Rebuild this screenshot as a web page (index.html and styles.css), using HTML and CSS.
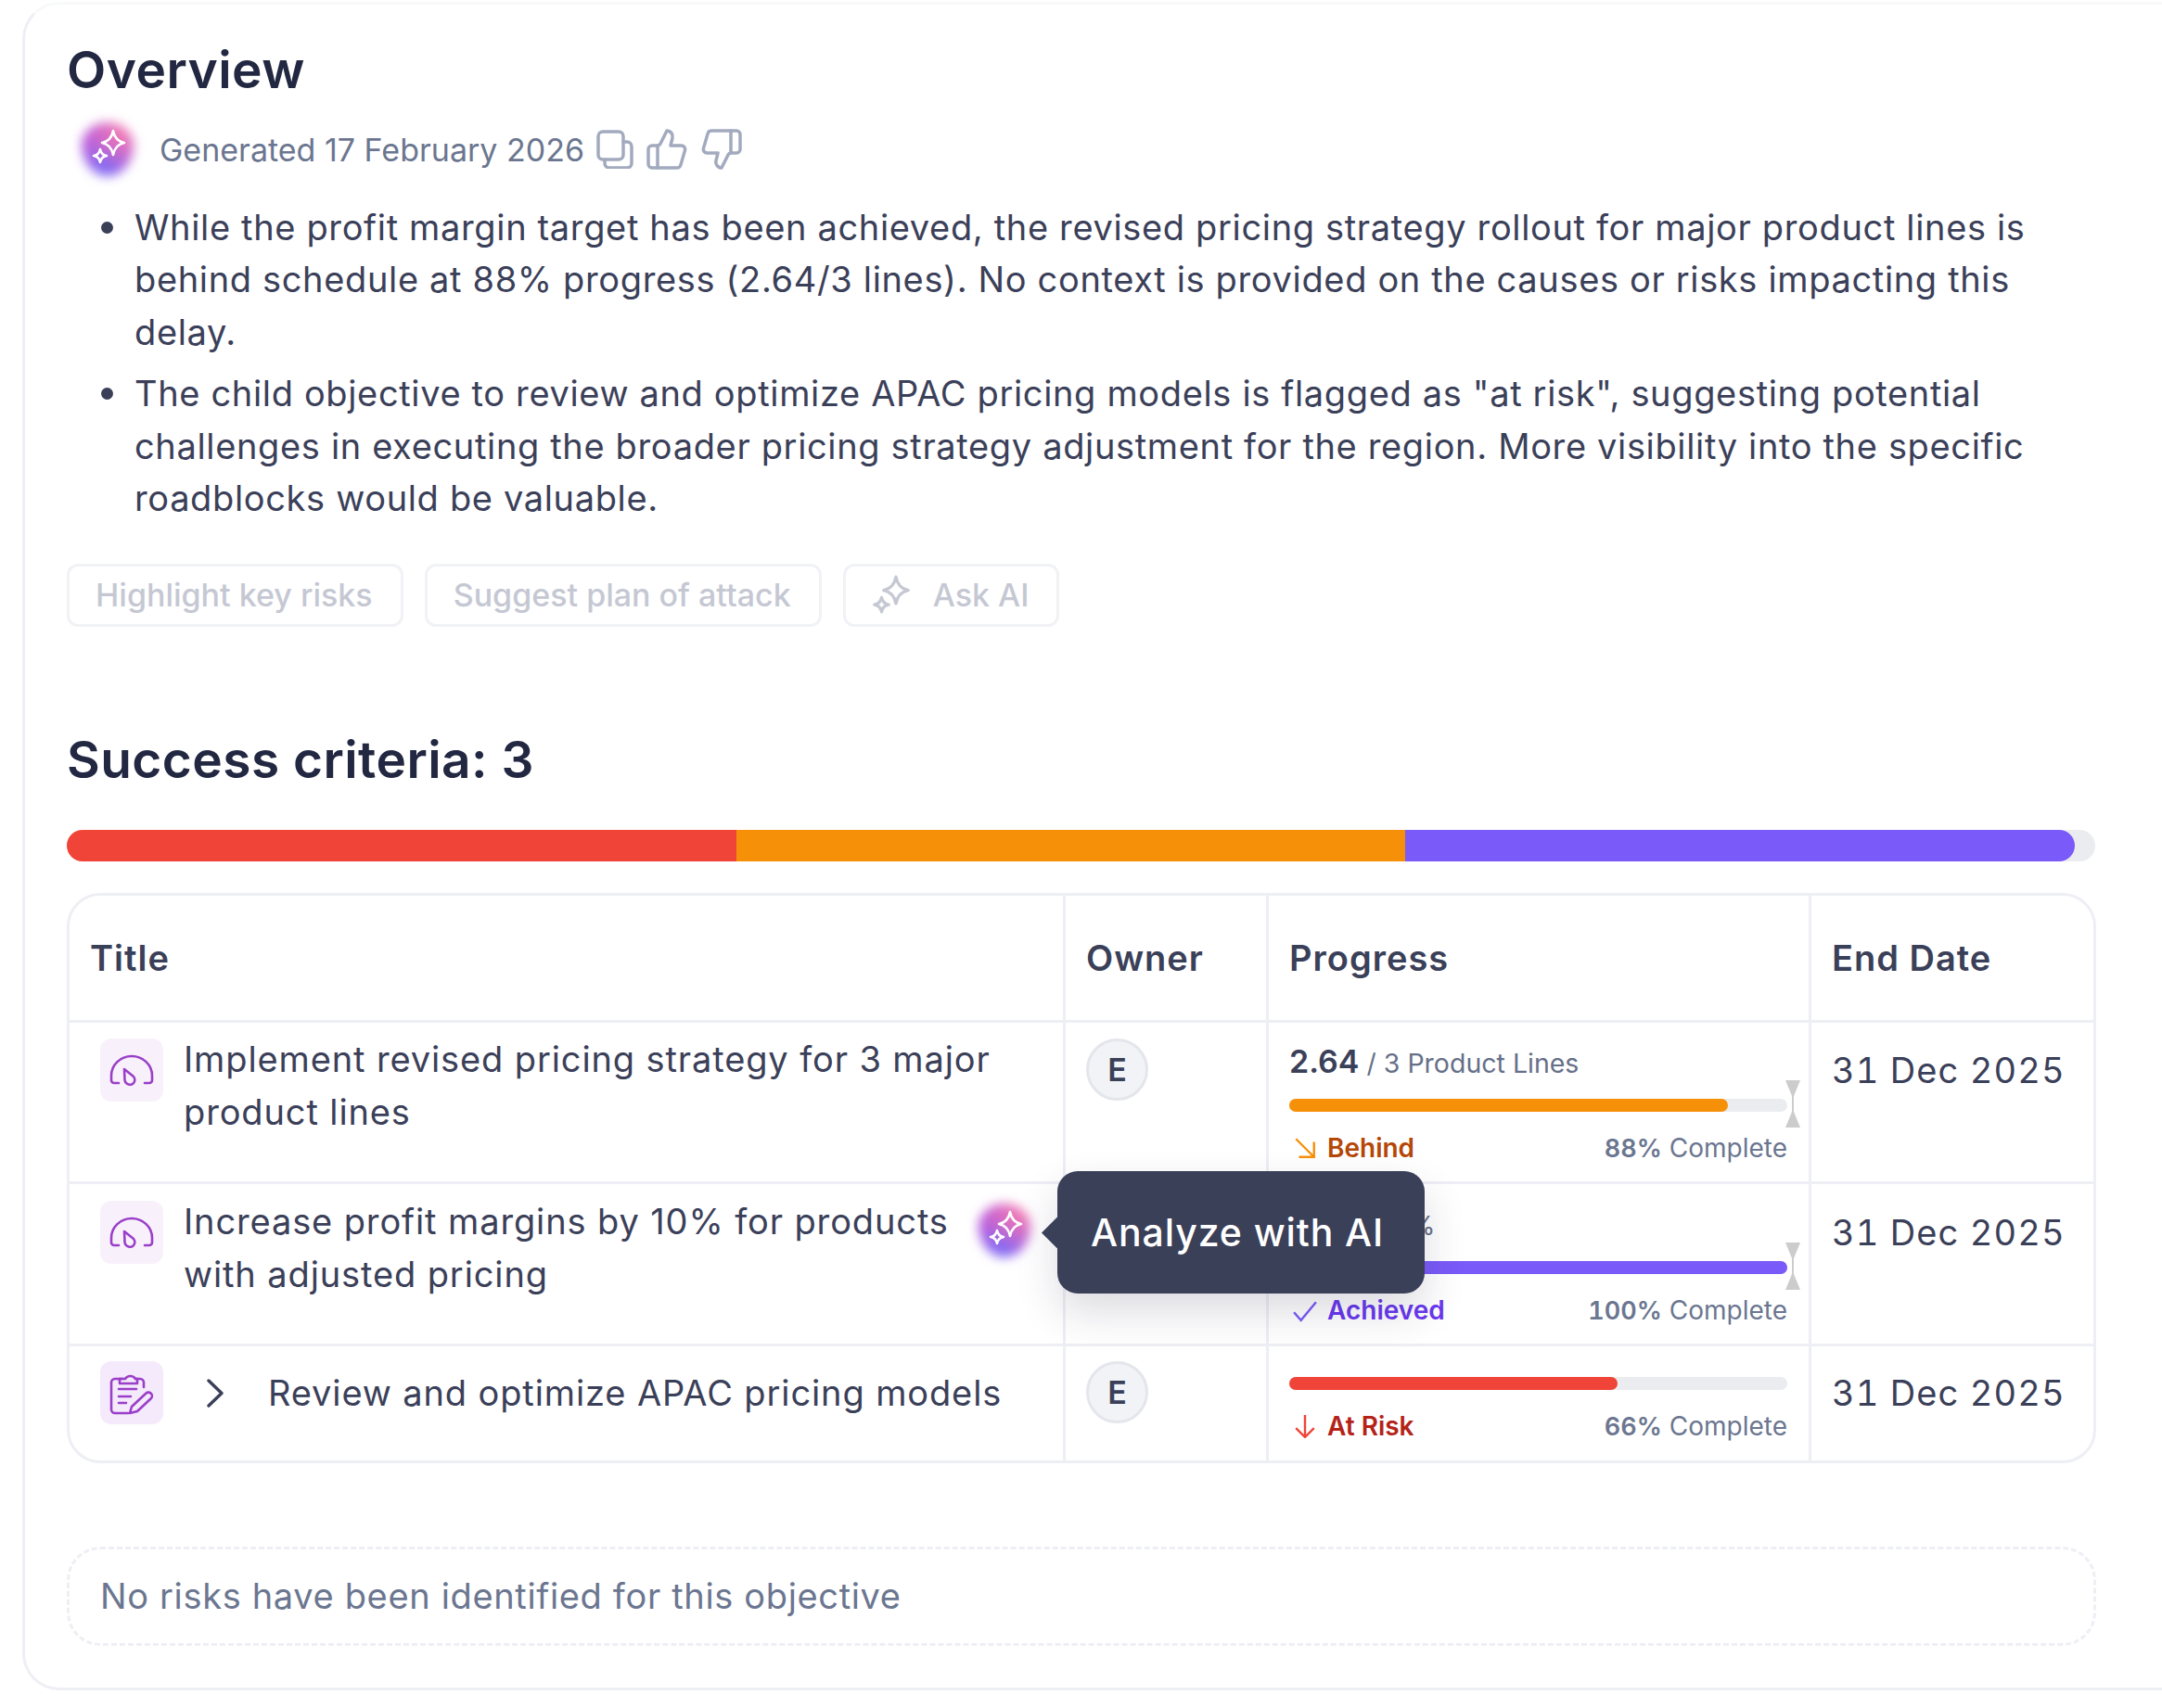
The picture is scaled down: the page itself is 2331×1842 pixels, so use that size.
FILE: index.html
```html
<!DOCTYPE html>
<html lang="en">
<head>
    <meta charset="UTF-8">
    <title>Objective overview</title>
    <link rel="stylesheet" href="styles.css">
</head>
<body>
    <svg class="defs" width="0" height="0">
        <symbol id="sparkle" viewBox="0 0 60 70">
            <path d="M37 15Q39 26 49 28Q39 30 37 41Q35 30 25 28Q35 26 37 15Z"/>
            <path d="M23 35Q24 41 30 42Q24 43 23 49Q22 43 16 42Q22 41 23 35Z"/>
        </symbol>
        <symbol id="gauge" viewBox="0 0 68 68">
            <path d="M20 48h-5a3 3 0 0 1-3-3v-5a22 21 0 0 1 44 0v5a3 3 0 0 1-3 3h-5"/>
            <path d="M26 33l10 8c2.5 3 1.5 7-2 8.5c-3.5 1-7-1-7.5-4.5z"/>
        </symbol>
        <symbol id="marker" viewBox="0 0 16 51">
            <path d="M0 0H16L9 17V34L16 51H0L7 34V17Z"/>
        </symbol>
    </svg>

    <div class="card">
        <h1 class="heading">Overview</h1>
        <div class="meta">
            <div class="ai-mark">
                <span class="ai-blob"></span>
                <svg class="ai-star"><use href="#sparkle"/></svg>
            </div>
            <span class="meta-text">Generated 17 February 2026</span>
            <svg class="meta-icon" viewBox="0 0 40 42"><path d="M7 2h17a5 5 0 0 1 5 5v20a5 5 0 0 1-5 5H7a5 5 0 0 1-5-5V7a5 5 0 0 1 5-5Z"/><path d="M29 13h4a5 5 0 0 1 5 5v18a5 5 0 0 1-5 5H14a5 5 0 0 1-5-5v-4"/></svg>
            <svg class="meta-icon thumb" viewBox="0 0 24 24"><path d="M7 10v12"/><path d="M15 5.88 14 10h5.83a2 2 0 0 1 1.92 2.56l-2.33 8A2 2 0 0 1 17.5 22H4a2 2 0 0 1-2-2v-8a2 2 0 0 1 2-2h2.76a2 2 0 0 0 1.79-1.11L12 2a3.13 3.13 0 0 1 3 3.88Z"/></svg>
            <svg class="meta-icon thumb" viewBox="0 0 24 24"><path d="M17 14V2"/><path d="M9 18.12 10 14H4.17a2 2 0 0 1-1.92-2.56l2.33-8A2 2 0 0 1 6.5 2H20a2 2 0 0 1 2 2v8a2 2 0 0 1-2 2h-2.76a2 2 0 0 0-1.79 1.11L12 22a3.13 3.13 0 0 1-3-3.88Z"/></svg>
        </div>

        <ul class="summary">
            <li>While the profit margin target has been achieved, the revised pricing strategy rollout for major product lines is behind schedule at 88% progress (2.64/3 lines). No context is provided on the causes or risks impacting this delay.</li>
            <li>The child objective to review and optimize APAC pricing models is flagged as "at risk", suggesting potential challenges in executing the broader pricing strategy adjustment for the region. More visibility into the specific roadblocks would be valuable.</li>
        </ul>

        <div class="actions">
            <button class="action">Highlight key risks</button>
            <button class="action">Suggest plan of attack</button>
            <button class="action action-ai">
                <svg class="action-star" viewBox="14 13 37 38"><use href="#sparkle" width="60" height="70"/></svg>
                Ask AI
            </button>
        </div>

        <h2 class="heading section-heading">Success criteria: 3</h2>
        <div class="stack">
            <span class="stack-part red"></span>
            <span class="stack-part orange"></span>
            <span class="stack-part purple"></span>
        </div>

        <table class="criteria">
            <colgroup>
                <col class="col-title">
                <col class="col-owner">
                <col class="col-progress">
                <col class="col-date">
            </colgroup>
            <thead>
                <tr>
                    <th>Title</th>
                    <th>Owner</th>
                    <th>Progress</th>
                    <th>End Date</th>
                </tr>
            </thead>
            <tbody>
                <tr class="row-tall">
                    <td>
                        <div class="title-cell">
                            <span class="type-icon"><svg class="type-glyph"><use href="#gauge"/></svg></span>
                            <span class="title-text">Implement revised pricing strategy for 3 major product lines</span>
                        </div>
                    </td>
                    <td><span class="avatar">E</span></td>
                    <td>
                        <div class="value"><b>2.64</b> / 3 Product Lines</div>
                        <div class="bar">
                            <span class="fill orange" style="width: 88%"></span>
                            <svg class="bar-marker"><use href="#marker"/></svg>
                        </div>
                        <div class="status-row">
                            <span class="status behind">
                                <svg class="status-icon" viewBox="0 0 24 24"><path d="M3 3l18 18M21 6v15H6"/></svg>
                                Behind
                            </span>
                            <span class="complete"><b>88%</b> Complete</span>
                        </div>
                    </td>
                    <td class="date">31 Dec 2025</td>
                </tr>
                <tr class="row-tall">
                    <td class="hover-cell">
                        <div class="title-cell">
                            <span class="type-icon"><svg class="type-glyph"><use href="#gauge"/></svg></span>
                            <span class="title-text">Increase profit margins by 10% for products with adjusted pricing</span>
                        </div>
                        <div class="ai-mark ai-mark-row">
                            <span class="ai-blob"></span>
                            <svg class="ai-star"><use href="#sparkle"/></svg>
                        </div>
                        <div class="tooltip">Analyze with AI</div>
                    </td>
                    <td></td>
                    <td>
                        <div class="value"><b>10%</b> / 10&#8202;%</div>
                        <div class="bar">
                            <span class="fill purple" style="width: 100%"></span>
                            <svg class="bar-marker"><use href="#marker"/></svg>
                        </div>
                        <div class="status-row">
                            <span class="status achieved">
                                <svg class="status-icon" viewBox="0 0 24 24"><path d="M1 14l7 8L23 4"/></svg>
                                Achieved
                            </span>
                            <span class="complete"><b>100%</b> Complete</span>
                        </div>
                    </td>
                    <td class="date">31 Dec 2025</td>
                </tr>
                <tr class="row-short">
                    <td>
                        <div class="title-cell title-cell-child">
                            <span class="type-icon type-icon-task">
                                <svg class="type-glyph" viewBox="0 0 68 68">
                                    <path d="M24 19h-8a4 4 0 0 0-4 4v29a4 4 0 0 0 4 4h14"/>
                                    <path d="M38 19h5a4 4 0 0 1 4 4v5"/>
                                    <path d="M21 24v-5h6a6.500 6.500 0 0 1 11 0h2v5z"/>
                                    <path d="M20 30h19M20 38h13M20 45h8"/>
                                    <path d="M32 56l2-7L49 35a3.500 3.500 0 0 1 6 5L40 54z"/>
                                </svg>
                            </span>
                            <svg class="chevron" viewBox="0 0 18 31"><path d="M2 2l14 13.500L2 29"/></svg>
                            <span class="title-text">Review and optimize APAC pricing models</span>
                        </div>
                    </td>
                    <td><span class="avatar">E</span></td>
                    <td class="progress-short">
                        <div class="bar">
                            <span class="fill red" style="width: 66%"></span>
                        </div>
                        <div class="status-row">
                            <span class="status at-risk">
                                <svg class="status-icon" viewBox="0 0 24 24"><path d="M12 1v22M3 14l9 9 9-9"/></svg>
                                At Risk
                            </span>
                            <span class="complete"><b>66%</b> Complete</span>
                        </div>
                    </td>
                    <td class="date">31 Dec 2025</td>
                </tr>
            </tbody>
        </table>

        <div class="risks">No risks have been identified for this objective</div>
    </div>
</body>
</html>
```

FILE: styles.css
```css
html, body {
    height: 100%;
}

body {
    margin: 0;
    overflow: hidden;
    background-color: #fff;
    color: #3b4059;
    font-family: 'Inter', 'Liberation Sans', sans-serif;
}

.defs {
    position: absolute;
}

/* outer card runs off the right side of the window */
.card {
    box-sizing: border-box;
    width: 2360px;
    margin: 2px 0 0 24px;
    padding: 37px 0 45px 45px;
    background-color: #fff;
    border: 3px solid #eeeff4;
    border-top-color: #f8f9f9;
    border-radius: 40px;
}

.heading {
    margin: 0;
    color: #232842;
    font-size: 55px;
    font-weight: 600;
    letter-spacing: 0.45px;
    line-height: 66px;
}

.meta {
    display: flex;
    align-items: center;
    height: 70px;
    margin-top: 18px;
}

.ai-mark {
    position: relative;
    flex: none;
    width: 60px;
    height: 70px;
    margin-left: 13px;
}

.ai-blob {
    position: absolute;
    top: 6px;
    left: 3px;
    width: 56px;
    height: 58px;
    border-radius: 50% 50% 50% 50% / 42% 42% 58% 58%;
    background:
        radial-gradient(circle at 75% 20%, #f47ab0 0, rgba(244, 122, 176, 0) 62%),
        radial-gradient(circle at 45% 85%, #7d6cf6 0, rgba(125, 108, 246, 0) 62%),
        #bb5cdb;
    filter: blur(6px);
}

.ai-star {
    position: absolute;
    top: 0;
    left: 0;
    width: 60px;
    height: 70px;
    fill: none;
    stroke: #fff;
    stroke-width: 2.6;
    stroke-linejoin: round;
}

.meta-text {
    margin-left: 27px;
    color: #6b7690;
    font-size: 34px;
}

.meta-icon {
    width: 42px;
    height: 42px;
    margin-left: 12px;
    fill: none;
    stroke: #a3aabf;
    stroke-width: 3.5;
    stroke-linecap: round;
    stroke-linejoin: round;
}

.thumb {
    width: 48px;
    height: 48px;
    margin-left: 11px;
    stroke-width: 1.75;
}

.summary {
    width: 2114px;
    margin: 21px 0 0;
    padding: 0 0 0 73px;
    font-size: 38px;
    letter-spacing: 0.65px;
    line-height: 56.4px;
    list-style: none;
}

.summary li {
    position: relative;
}

.summary li::before {
    content: "";
    position: absolute;
    top: 22px;
    left: -36px;
    width: 13px;
    height: 13px;
    background-color: #3b4059;
    border-radius: 50%;
}

.summary li + li {
    margin-top: 10px;
}

.actions {
    display: flex;
    gap: 23px;
    margin-top: 43px;
}

.action {
    display: flex;
    align-items: center;
    box-sizing: border-box;
    height: 68px;
    padding: 0 30px 2px 28px;
    background: #fff;
    border: 3px solid #f1f2f5;
    border-radius: 12px;
    color: #c5c8d3;
    font-family: inherit;
    font-size: 34px;
    font-weight: 500;
}

.action-ai {
    gap: 23px;
    padding-left: 27px;
}

.action-star {
    width: 44px;
    height: 42px;
    fill: none;
    stroke: #c5c8d3;
    stroke-width: 3;
    stroke-linejoin: round;
}

.section-heading {
    margin-top: 110px;
}

.stack {
    display: flex;
    width: 2187px;
    height: 34px;
    margin-top: 43px;
    overflow: hidden;
    background-color: #ebecf0;
    border-radius: 17px;
}

.stack-part {
    width: 33%;
}

.stack-part:last-child {
    border-radius: 0 17px 17px 0;
}

.red {
    background-color: #f04438;
}

.orange {
    background-color: #f79009;
}

.purple {
    background-color: #7a5af8;
}

.criteria {
    box-sizing: border-box;
    width: 2188px;
    margin-top: 34px;
    table-layout: fixed;
    border: 3px solid #eeeff4;
    border-spacing: 0;
    border-radius: 36px;
}

.col-title {
    width: 1074px;
}

.col-owner {
    width: 219px;
}

.col-progress {
    width: 585px;
}

.criteria th,
.criteria td {
    box-sizing: border-box;
    padding: 0 0 0 22px;
    border-right: 3px solid #eeeff4;
    border-bottom: 3px solid #eeeff4;
    vertical-align: top;
}

.criteria th:last-child,
.criteria td:last-child {
    border-right: 0;
}

.criteria tbody tr:last-child td {
    border-bottom: 0;
}

.criteria th {
    height: 137px;
    font-size: 38px;
    font-weight: 600;
    letter-spacing: 1px;
    text-align: left;
    vertical-align: middle;
}

.row-tall td {
    height: 175px;
    padding-top: 18px;
}

.row-tall:first-child td {
    height: 174px;
    padding-top: 17px;
}

.row-short td {
    height: 123px;
    padding-top: 16px;
}

.hover-cell {
    position: relative;
}

.title-cell {
    display: flex;
    align-items: flex-start;
    gap: 22px;
    padding: 0 57px 0 11px;
}

.title-cell-child {
    align-items: center;
    gap: 0;
}

.type-icon {
    flex: none;
    width: 68px;
    height: 68px;
    background-color: #f8f1fb;
    border-radius: 12px;
}

.type-icon-task {
    background-color: #f5eafb;
}

.type-glyph {
    display: block;
    width: 68px;
    height: 68px;
    fill: none;
    stroke: #9a3fc9;
    stroke-width: 2.6;
    stroke-linecap: round;
    stroke-linejoin: round;
}

.title-text {
    margin-top: -6px;
    font-size: 38px;
    letter-spacing: 0.88px;
    line-height: 56.4px;
}

.title-cell-child .title-text {
    margin-top: 0;
}

.chevron {
    flex: none;
    width: 18px;
    height: 31px;
    margin: 0 48px 0 47px;
    fill: none;
    stroke: #3b4059;
    stroke-width: 3.4;
    stroke-linecap: round;
    stroke-linejoin: round;
}

.ai-mark-row {
    position: absolute;
    top: 15px;
    left: 977px;
    margin: 0;
}

.tooltip {
    position: absolute;
    top: -14px;
    left: 1065px;
    z-index: 2;
    display: flex;
    align-items: center;
    box-sizing: border-box;
    width: 396px;
    height: 132px;
    padding-left: 36px;
    background-color: #3b4059;
    border-radius: 22px;
    box-shadow: 0 20px 45px rgba(35, 40, 66, 0.16);
    color: #fff;
    font-size: 41px;
    font-weight: 500;
    letter-spacing: 0.9px;
}

.tooltip::before {
    content: "";
    position: absolute;
    top: 49px;
    left: -17px;
    width: 17px;
    height: 34px;
    background-color: #3b4059;
    clip-path: polygon(100% 0, 0 50%, 100% 100%);
}

.avatar {
    display: flex;
    align-items: center;
    justify-content: center;
    box-sizing: border-box;
    width: 67px;
    height: 67px;
    background-color: #f1f3f7;
    border: 3px solid #e4e6ec;
    border-radius: 50%;
    font-size: 34px;
    font-weight: 600;
}

.value {
    height: 50px;
    margin-bottom: 15px;
    color: #667089;
    font-size: 28.5px;
    line-height: 50px;
}

.value b {
    color: #3b4059;
    font-size: 34px;
    font-weight: 600;
}

.bar {
    position: relative;
    width: 537px;
    height: 14px;
    background-color: #ebecf0;
    border-radius: 7px;
}

.fill {
    display: block;
    height: 100%;
    border-radius: 7px;
}

.bar-marker {
    position: absolute;
    top: -20px;
    left: 535px;
    width: 16px;
    height: 51px;
    fill: #cccccc;
}

.status-row {
    display: flex;
    align-items: center;
    justify-content: space-between;
    width: 537px;
    height: 40px;
    margin-top: 19px;
    font-size: 28px;
}

.status {
    display: flex;
    align-items: center;
    gap: 11px;
    font-weight: 600;
}

.status-icon {
    width: 26px;
    height: 26px;
    margin-left: 4px;
    fill: none;
    stroke-width: 2.2;
}

.behind {
    color: #b54708;
}

.behind .status-icon {
    stroke: #f79009;
}

.achieved {
    color: #6938ef;
}

.achieved .status-icon {
    stroke: #7a5af8;
}

.at-risk {
    color: #b42318;
}

.at-risk .status-icon {
    stroke: #f04438;
}

.complete {
    color: #6b7690;
}

.complete b {
    font-size: 27px;
    font-variant-numeric: tabular-nums;
    font-weight: 600;
}

.row-short .progress-short {
    padding-top: 33px;
}

.date {
    font-size: 38px;
    font-variant-numeric: tabular-nums;
    letter-spacing: 1.1px;
    line-height: 68px;
}

.risks {
    box-sizing: border-box;
    width: 2188px;
    height: 107px;
    margin-top: 90px;
    padding-left: 33px;
    border: 3px dashed #eeeff4;
    border-radius: 36px;
    color: #6b7690;
    font-size: 38px;
    letter-spacing: 0.65px;
    line-height: 101px;
}
```
